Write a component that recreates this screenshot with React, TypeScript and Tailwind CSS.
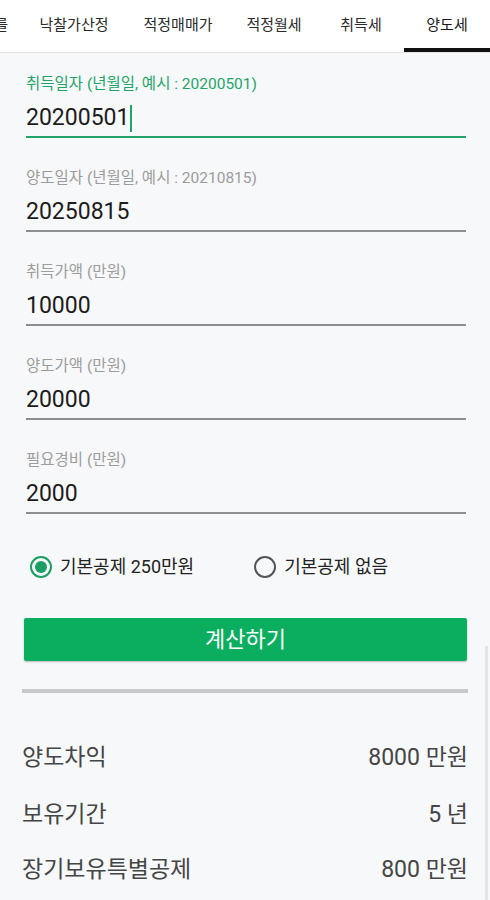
import React from "react";

const font = { fontFamily: "Roboto, 'Noto Sans CJK KR', sans-serif" };

function Field({ label, value, active }: { label: string; value: string; active?: boolean }) {
  return (
    <div className="flex flex-col">
      <div
        className={`h-[18px] whitespace-nowrap text-[15.5px] leading-[18px] ${active ? "text-[#1fa56a]" : "text-[#9c9c9c]"}`}
      >
        {label}
      </div>
      <div className="mt-[10px] flex h-[30px] items-center text-[23px] leading-[30px] text-[#1c1c1c]">
        <span>{value}</span>
        {active && <span className="ml-[1px] inline-block h-[27px] w-[2px] bg-[#1fa56a]" />}
      </div>
      <div className={active ? "mt-[3px] h-[2px] bg-[#1fa56a]" : "mt-[3px] h-[2px] bg-[#8e8e8e]"} />
    </div>
  );
}

export default function App() {
  const tabs = [
    { t: "낙찰가산정", w: "w-[104px]" },
    { t: "적정매매가", w: "w-[104px]" },
    { t: "적정월세", w: "w-[88px]" },
    { t: "취득세", w: "w-[86px]" },
  ];
  return (
    <div className="relative h-[900px] w-[490px] overflow-hidden bg-[#f7f8fa]" style={font}>
      {/* tab bar */}
      <div className="flex h-[53px] border-b border-[#e2e2e2] bg-white text-[15px] text-[#2a2a2a]">
        <div className="flex w-[22px] justify-end overflow-hidden pr-[14px] pt-[14px]">
          <span className="whitespace-nowrap">를</span>
        </div>
        {tabs.map((x) => (
          <div key={x.t} className={`${x.w} pt-[14px] text-center`}>
            {x.t}
          </div>
        ))}
        <div className="flex w-[86px] flex-col">
          <div className="flex-1 pt-[14px] text-center text-[#1a1a1a]">양도세</div>
          <div className="h-[4px] bg-[#111]" />
        </div>
      </div>

      {/* form */}
      <div className="flex flex-col gap-[31px] pl-[26px] pr-[24px] pt-[22px]">
        <Field label="취득일자 (년월일, 예시 : 20200501)" value="20200501" active />
        <Field label="양도일자 (년월일, 예시 : 20210815)" value="20250815" />
        <Field label="취득가액 (만원)" value="10000" />
        <Field label="양도가액 (만원)" value="20000" />
        <Field label="필요경비 (만원)" value="2000" />
      </div>

      {/* radios */}
      <div className="mt-[39px] flex items-center pl-[30px] text-[18px] text-[#222]">
        <div className="flex items-center">
          <span className="flex h-[22px] w-[22px] items-center justify-center rounded-full border-2 border-[#1a9e63]">
            <span className="h-[12px] w-[12px] rounded-full bg-[#1a9e63]" />
          </span>
          <span className="ml-[8px]">기본공제 250만원</span>
        </div>
        <div className="ml-[60px] flex items-center">
          <span className="h-[22px] w-[22px] rounded-full border-2 border-[#555]" />
          <span className="ml-[8px]">기본공제 없음</span>
        </div>
      </div>

      {/* button */}
      <div className="mt-[38px] pl-[24px] pr-[23px]">
        <div className="flex h-[43px] items-center justify-center rounded-[2px] bg-[#0bae5e] text-[22px] text-white shadow-[0_1px_2px_rgba(0,0,0,0.25)]">
          계산하기
        </div>
      </div>

      {/* divider */}
      <div className="mx-[22px] mt-[28px] h-[4px] bg-[#c9c9c9]" />

      {/* results */}
      <div className="flex flex-col px-[22px] pt-[51px] text-[23px] text-[#454545]">
        <div className="flex h-[28px] items-center justify-between">
          <span>양도차익</span>
          <span>8000 만원</span>
        </div>
        <div className="mt-[29px] flex h-[28px] items-center justify-between">
          <span>보유기간</span>
          <span>5 년</span>
        </div>
        <div className="mt-[27px] flex h-[28px] items-center justify-between">
          <span>장기보유특별공제</span>
          <span>800 만원</span>
        </div>
      </div>

      {/* scrollbar */}
      <div className="absolute right-[2px] top-[646px] h-[254px] w-[3px] bg-[#e4e4e4]" />
    </div>
  );
}
